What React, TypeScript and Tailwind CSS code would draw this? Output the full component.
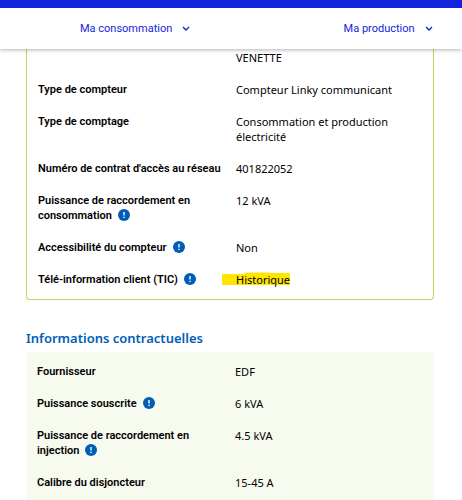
import type { ReactNode } from 'react'

type Row = {
  label: string
  value: ReactNode
  info?: boolean
}

const meterRows: Row[] = [
  { label: 'Type de compteur', value: 'Compteur Linky communicant' },
  { label: 'Type de comptage', value: 'Consommation et production électricité' },
  { label: "Numéro de contrat d'accès au réseau", value: '401822052' },
  { label: 'Puissance de raccordement en consommation', value: '12 kVA', info: true },
  { label: 'Accessibilité du compteur', value: 'Non', info: true },
  {
    label: 'Télé-information client (TIC)',
    value: <Highlight>Historique</Highlight>,
    info: true,
  },
]

const contractRows: Row[] = [
  { label: 'Fournisseur', value: 'EDF' },
  { label: 'Puissance souscrite', value: '6 kVA', info: true },
  { label: 'Puissance de raccordement en injection', value: '4.5 kVA', info: true },
  { label: 'Calibre du disjoncteur', value: '15-45 A' },
]

export default function App() {
  return (
    <div className="bg-white font-['Noto_Sans',sans-serif] text-[11px] leading-[15px] text-black">
      <header className="relative border-t-8 border-[#1423dc] bg-white shadow-[0_1px_4px_rgba(0,0,0,0.3)]">
        <nav className="grid h-[41px] grid-cols-[69%_31%] items-center pl-20 font-[Roboto,sans-serif] text-[11px] text-[#1423dc]">
          <NavItem label="Ma consommation" />
          <NavItem label="Ma production" />
        </nav>
      </header>

      <main className="pr-7 pl-[26px]">
        <section className="rounded-b border border-t-0 border-[#b5db62] px-[11px] pt-px pb-3">
          <dl className="flex flex-col gap-[17px]">
            <div className="grid grid-cols-[198px_1fr]">
              <dd className="col-start-2">VENETTE</dd>
            </div>
            {meterRows.map((row) => (
              <InfoRow key={row.label} {...row} />
            ))}
          </dl>
        </section>

        <h2 className="mt-7 text-[13px] leading-5 font-semibold text-[#005eb8]">Informations contractuelles</h2>

        <section className="mt-1 rounded bg-[#f7faef] px-[11px] pt-3 pb-2.5">
          <dl className="flex flex-col gap-[17px]">
            {contractRows.map((row) => (
              <InfoRow key={row.label} {...row} />
            ))}
          </dl>
        </section>
      </main>
    </div>
  )
}

function NavItem({ label }: { label: string }) {
  return (
    <button className="flex items-center gap-2.5 justify-self-start">
      {label}
      <svg viewBox="0 0 8 6" className="h-1.5 w-2" fill="none" stroke="currentColor" strokeWidth="1.4">
        <path d="M1 1l3 3 3-3" />
      </svg>
    </button>
  )
}

function InfoRow({ label, value, info }: Row) {
  return (
    <div className="grid grid-cols-[198px_1fr]">
      <dt className="pr-2 font-[Roboto,sans-serif] font-semibold">
        {label}
        {info && <InfoButton label={label} />}
      </dt>
      <dd>{value}</dd>
    </div>
  )
}

function InfoButton({ label }: { label: string }) {
  return (
    <button aria-label={`Aide : ${label}`} className="-mt-0.5 ml-1.5 inline-block h-3 w-3 align-middle">
      <svg viewBox="0 0 12 12" className="h-3 w-3">
        <circle cx="6" cy="6" r="6" fill="#005eb8" />
        <path d="M6 3v3.4M6 7.7v1.3" stroke="#fff" strokeWidth="1.4" />
      </svg>
    </button>
  )
}

// marker stroke that starts a little before the text
function Highlight({ children }: { children: ReactNode }) {
  return (
    <span className="relative">
      <svg
        viewBox="0 0 66 13"
        preserveAspectRatio="none"
        className="absolute top-0 right-0 -left-3.5 h-[13px] w-[calc(100%+14px)]"
      >
        <path d="M0 2H22V0.5H45L48 1H66V13H0z" fill="#ffe600" />
      </svg>
      <span className="relative">{children}</span>
    </span>
  )
}
